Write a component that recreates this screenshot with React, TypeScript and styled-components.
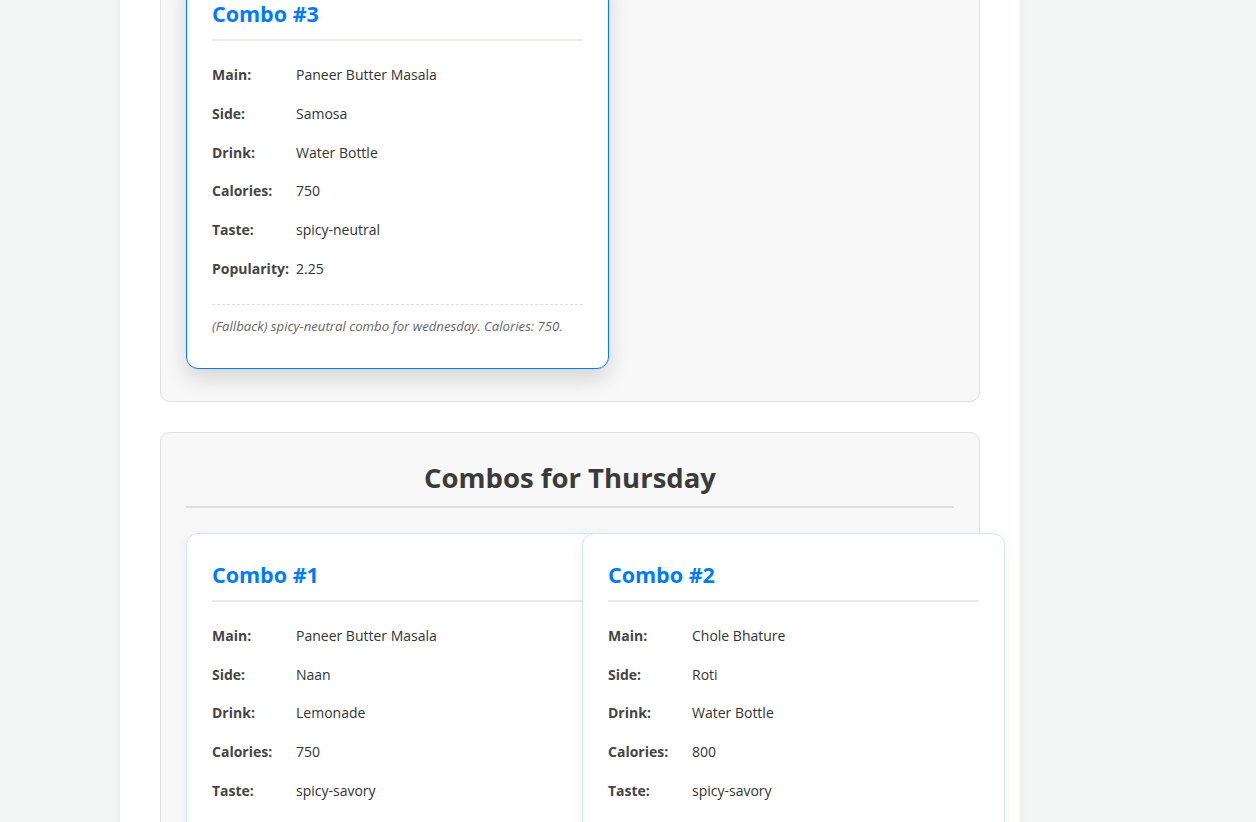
import React from 'react';
import styled, { createGlobalStyle } from 'styled-components';

interface Combo {
  id: number;
  main: string;
  side: string;
  drink: string;
  calories: number;
  taste: string;
  popularity: string;
  note: string;
}

interface DayPlan {
  day: string;
  combos: Combo[];
  highlighted?: number;
}

const GlobalStyle = createGlobalStyle`
  body {
    margin: 0;
    background: #f4f5f5;
    font-family: "Open Sans", "Noto Sans", sans-serif;
    color: #333;
  }
`;

const Page = styled.div`
  width: 820px;
  margin: -162px 0 0 120px;
  padding: 40px;
  background: #fff;
  box-shadow: 0 0 12px rgba(0, 0, 0, 0.06);
`;

const DaySection = styled.section`
  background: #f8f8f8;
  border: 1px solid #e0e0e0;
  border-radius: 10px;
  padding: 25px;
  margin-bottom: 30px;
`;

const DayTitle = styled.h2`
  margin: 0 0 25px;
  padding-bottom: 8px;
  border-bottom: 2px solid #ddd;
  text-align: center;
  font-size: 27.5px;
  line-height: 40px;
  font-weight: 700;
  color: #3b3b3b;
`;

const ComboGrid = styled.div`
  display: grid;
  grid-template-columns: 372px 372px;
  gap: 24px;
`;

const Card = styled.div<{ $active?: boolean }>`
  width: 371px;
  padding: 25px;
  background: #fff;
  border-radius: 12px;
  border: 1px solid ${({ $active }) => ($active ? '#007bff' : '#cfe8fb')};
  box-shadow: ${({ $active }) =>
    $active ? '0 10px 22px rgba(0, 0, 0, 0.14)' : '0 4px 14px rgba(0, 0, 0, 0.05)'};
  transform: ${({ $active }) => ($active ? 'translateY(-7px)' : 'none')};
`;

const CardTitle = styled.h3`
  margin: 0 0 15px;
  padding-bottom: 9px;
  border-bottom: 2px solid #e9ecef;
  font-size: 21.5px;
  line-height: 32px;
  font-weight: 700;
  color: #007bff;
`;

const Row = styled.div`
  display: flex;
  padding: 8px 0;
  font-size: 14px;
  line-height: 22.8px;
`;

const Label = styled.span`
  flex: 0 0 84px;
  font-weight: 700;
  color: #454545;
`;

const Value = styled.span`
  color: #333;
`;

const Note = styled.p`
  margin: 15px 0 0;
  padding: 12px 0 7px;
  border-top: 1px dashed #ddd;
  font-size: 13.2px;
  line-height: 19px;
  font-style: italic;
  color: #666;
`;

const plans: DayPlan[] = [
  {
    day: 'Wednesday',
    highlighted: 3,
    combos: [
      {
        id: 3,
        main: 'Paneer Butter Masala',
        side: 'Samosa',
        drink: 'Water Bottle',
        calories: 750,
        taste: 'spicy-neutral',
        popularity: '2.25',
        note: '(Fallback) spicy-neutral combo for wednesday. Calories: 750.',
      },
    ],
  },
  {
    day: 'Thursday',
    combos: [
      {
        id: 1,
        main: 'Paneer Butter Masala',
        side: 'Naan',
        drink: 'Lemonade',
        calories: 750,
        taste: 'spicy-savory',
        popularity: '2.5',
        note: 'spicy-savory combo for thursday. Calories: 750.',
      },
      {
        id: 2,
        main: 'Chole Bhature',
        side: 'Roti',
        drink: 'Water Bottle',
        calories: 800,
        taste: 'spicy-savory',
        popularity: '2.4',
        note: 'spicy-savory combo for thursday. Calories: 800.',
      },
    ],
  },
];

const ComboCard: React.FC<{ combo: Combo; active?: boolean }> = ({ combo, active }) => (
  <Card $active={active}>
    <CardTitle>Combo #{combo.id}</CardTitle>
    <Row>
      <Label>Main:</Label>
      <Value>{combo.main}</Value>
    </Row>
    <Row>
      <Label>Side:</Label>
      <Value>{combo.side}</Value>
    </Row>
    <Row>
      <Label>Drink:</Label>
      <Value>{combo.drink}</Value>
    </Row>
    <Row>
      <Label>Calories:</Label>
      <Value>{combo.calories}</Value>
    </Row>
    <Row>
      <Label>Taste:</Label>
      <Value>{combo.taste}</Value>
    </Row>
    <Row>
      <Label>Popularity:</Label>
      <Value>{combo.popularity}</Value>
    </Row>
    <Note>{combo.note}</Note>
  </Card>
);

const App: React.FC = () => (
  <>
    <GlobalStyle />
    <Page>
      {plans.map((plan) => (
        <DaySection key={plan.day}>
          <DayTitle>Combos for {plan.day}</DayTitle>
          <ComboGrid>
            {plan.combos.map((c) => (
              <ComboCard key={c.id} combo={c} active={plan.highlighted === c.id} />
            ))}
          </ComboGrid>
        </DaySection>
      ))}
    </Page>
  </>
);

export default App;
